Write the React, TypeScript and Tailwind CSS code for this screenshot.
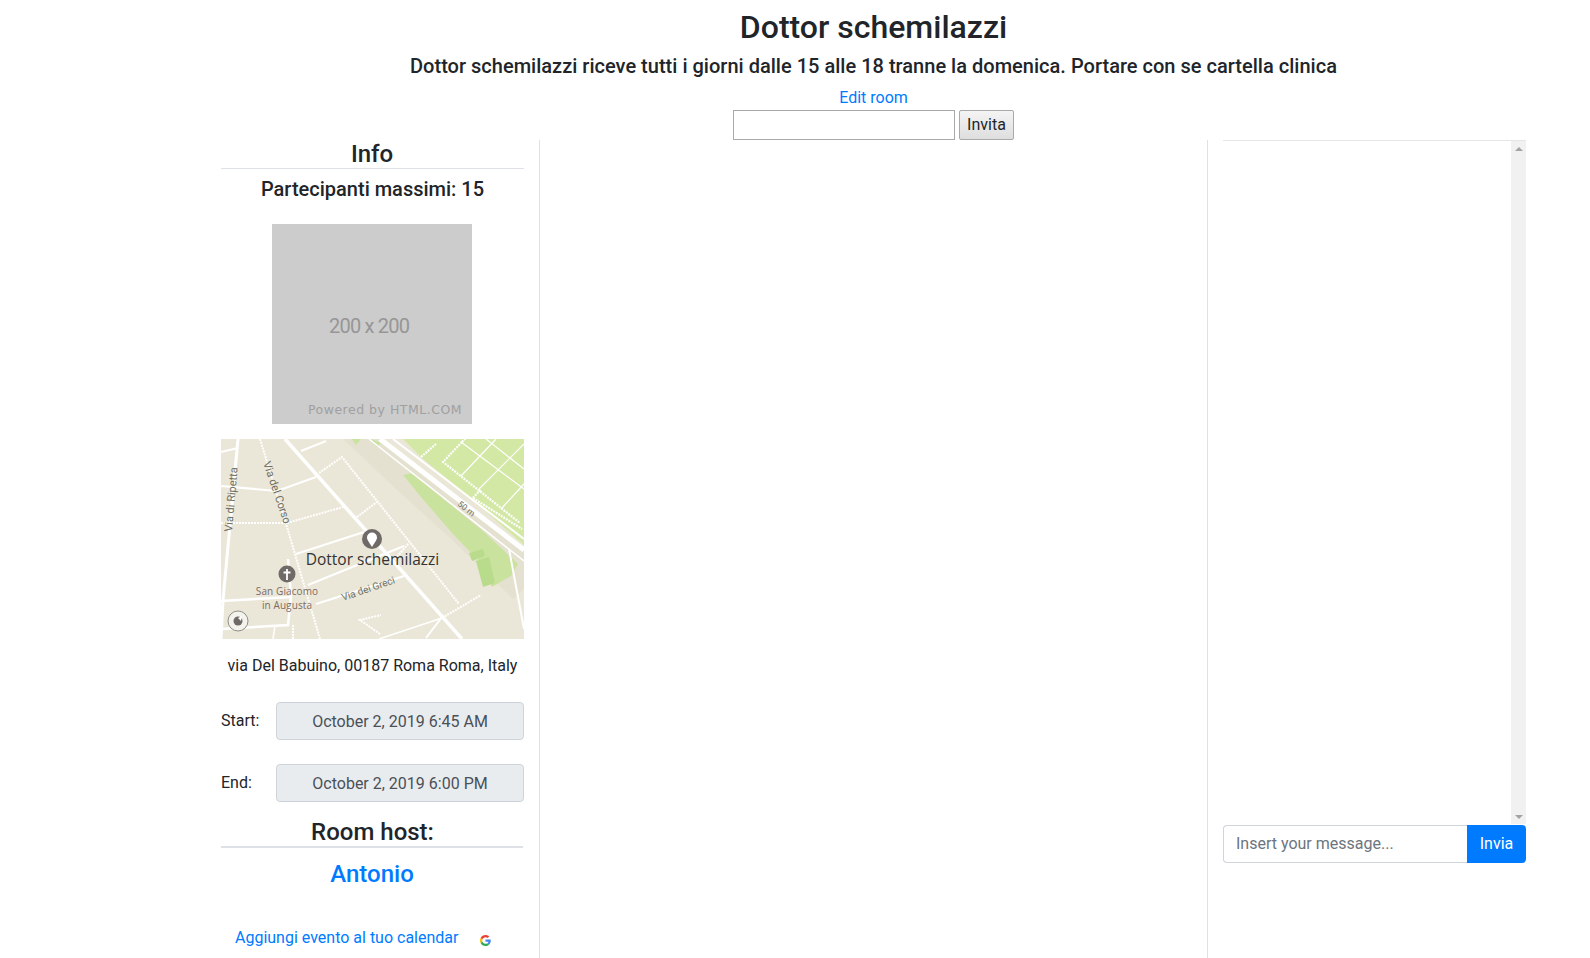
const font = { fontFamily: "Roboto, sans-serif" };

function MapThumb() {
  const label = "font-['Roboto'] fill-[#6f6f62]";
  return (
    <svg width="303" height="200" viewBox="0 0 303 200" className="block">
      <rect width="303" height="200" fill="#ebe7d8" />
      {/* railway embankment and park */}
      <path d="M122 0L159 0L303 112L303 150L292 160L230 100L175 50Z" fill="#e5e1d0" />
      <path d="M185 0L303 0L303 106L252 61L202 20L182 0Z" fill="#d2e8a4" />
      <path d="M182 36L192 34L225 62L262 92L297 125L290 137L271 148L258 122L232 95L200 58Z" fill="#c9e29e" />
      <path d="M248 114L262 110L264 117L251 122Z M255 122L268 118L274 144L262 148Z" fill="#b9dc8c" />
      <path d="M131 0L135 6L140 0M150 0L156 8L160 4" fill="#c9e29e" />
      {/* park paths */}
      <g stroke="#fff" fill="none">
        <path d="M240 37L275 0M258 50L303 5M280 70L303 45M240 3L303 50M265 0L303 30" strokeWidth="1.200" />
        <path d="M241 3L222 23L299 84M252 59L301 90M252 59L260 50M241 3L250 -6M200 18L215 5" strokeWidth="2.200" strokeDasharray="2 1" />
      </g>
      {/* railway */}
      <g stroke="#fff" fill="none">
        <path d="M159 0L303 111" strokeWidth="5" />
        <path d="M172 0L303 100" strokeWidth="2" />
        <path d="M148 0L303 122" strokeWidth="1.500" />
        <path d="M288 110L303 190" strokeWidth="2" />
      </g>
      {/* streets */}
      <g stroke="#fff" fill="none" strokeWidth="2.500">
        <path d="M64 0L241 200" strokeWidth="3.500" />
        <path d="M17 0L2 161L0 200" strokeWidth="3" />
        <path d="M0 47L56 52L95 38" strokeWidth="2" />
        <path d="M0 13L17 9M80 12L105 2" strokeWidth="2" />
        <path d="M75 115L143 93" strokeWidth="2" />
        <path d="M87 146L183 107" strokeWidth="2" />
        <path d="M0 162L70 158L67 120" strokeWidth="2.500" />
        <path d="M0 190L67 186L70 158" strokeWidth="2.500" />
        <path d="M95 165L183 137" strokeWidth="2" />
        <path d="M205 199L221 178" strokeWidth="2" />
        <path d="M54 186L52 200M158 200L221 179" strokeWidth="1.500" />
      </g>
      <g stroke="#fff" fill="none" strokeWidth="2" strokeDasharray="2 1">
        <path d="M39 0L66 88L99 200" />
        <path d="M0 84L66 84L122 68" />
        <path d="M98 34L121 18L238 165" />
        <path d="M136 78L156 63" />
        <path d="M174 120L188 104" />
        <path d="M221 179L260 156" />
        <path d="M159 195L139 181L160 176" />
        <path d="M72 186L72 200" />
      </g>
      {/* POI pins */}
      <circle cx="151" cy="100" r="10" fill="#6f6a68" />
      <path d="M151 108C148 103 146 101 146 98.500A5 5 0 0 1 156 98.500C156 101 154 103 151 108Z" fill="#fff" />
      <text x="151.500" y="126" textAnchor="middle" fontSize="15.500" fill="#333" className="font-['Open_Sans']">Dottor schemilazzi</text>
      <circle cx="66" cy="135" r="8.500" fill="#6f6a68" />
      <path d="M66 130V141M62.500 133.500H69.500" stroke="#fff" strokeWidth="1.800" />
      <text x="66" y="156" textAnchor="middle" fontSize="10" letterSpacing="0.100" fill="#7d6a63" className="font-['Open_Sans']">San Giacomo</text>
      <text x="66" y="170" textAnchor="middle" fontSize="10" letterSpacing="0.100" fill="#7d6a63" className="font-['Open_Sans']">in Augusta</text>
      <text transform="translate(122 162) rotate(-19)" fontSize="10" className={label}>Via dei Greci</text>
      <text transform="translate(11 93) rotate(-85)" fontSize="11" className={label}>Via di Ripetta</text>
      <text transform="translate(42 24) rotate(71)" fontSize="11" className={label}>Via del Corso</text>
      <text transform="translate(236 66) rotate(38)" fontSize="8.500" className={label}>50 m</text>
      {/* locator button */}
      <circle cx="17" cy="182" r="10" fill="#f4f2ec" stroke="#8f8f88" strokeWidth="1" />
      <circle cx="17" cy="182" r="4.500" fill="#6f6a68" />
      <path d="M17 179L21 177L20 182Z" fill="#fff" />
    </svg>
  );
}

function GoogleG() {
  return (
    <svg width="11" height="11" viewBox="0 0 48 48">
      <path fill="#EA4335" d="M24 9.500c3.500 0 6.700 1.200 9.200 3.600l6.900-6.900C35.900 2.400 30.500 0 24 0 14.600 0 6.500 5.400 2.600 13.200l8 6.200C12.500 13.700 17.800 9.500 24 9.500z" />
      <path fill="#4285F4" d="M46.900 24.500c0-1.600-.2-3.100-.4-4.500H24v9h12.900c-.6 3-2.200 5.500-4.700 7.200l7.700 6c4.500-4.200 7-10.300 7-17.700z" />
      <path fill="#FBBC05" d="M10.500 28.600c-.5-1.500-.8-3-.8-4.600s.3-3.100.8-4.600l-8-6.200C.9 16.500 0 20.100 0 24s.9 7.500 2.600 10.800l7.900-6.200z" />
      <path fill="#34A853" d="M24 48c6.500 0 11.900-2.100 15.900-5.800l-7.700-6c-2.200 1.400-4.900 2.300-8.200 2.300-6.200 0-11.500-4.200-13.400-9.900l-8 6.200C6.500 42.600 14.600 48 24 48z" />
    </svg>
  );
}

function DateRow({ label, value }: { label: string; value: string }) {
  return (
    <div className="flex h-[38px] w-[303px]">
      <span className="w-[55px] text-[16px] leading-[37px]">{label}</span>
      <div className="flex-1 rounded border border-[#ced4da] bg-[#e9ecef] text-center leading-[37px] text-[#495057]">
        {value}
      </div>
    </div>
  );
}

export default function App() {
  return (
    <div style={font} className="h-[958px] overflow-hidden bg-white text-[16px] text-[#212529]">
      <div className="ml-[221px] w-[1305px] pt-2">
        <h2 className="mb-2 text-center text-[32px] leading-[38.400px] font-medium">Dottor schemilazzi</h2>
        <h5 className="mb-2 text-center text-[20px] leading-[24px] font-medium tracking-[0.015px]">
          Dottor schemilazzi riceve tutti i giorni dalle 15 alle 18 tranne la domenica. Portare con se cartella clinica
        </h5>
        <div className="text-center leading-[24px]">
          <a href="#" className="text-[#007bff]">Edit room</a>
        </div>
        <div className="flex justify-center gap-1">
          <input className="h-[30px] w-[222px] border border-[#a9a9a9] bg-white" />
          <button className="h-[30px] w-[55px] rounded-[2px] border border-[#a9a9a9] bg-gradient-to-b from-[#f4f4f4] to-[#dedede] text-[16px]">
            Invita
          </button>
        </div>

        <div className="flex h-[818px]">
          {/* info */}
          <div className="w-[319px] border-r border-[#dee2e6]">
            <div className="w-[303px]">
              <h4 className="h-[29px] border-b border-[#dee2e6] pr-[1px] text-center text-[24px] leading-[28.800px] font-medium">Info</h4>
              <h5 className="mt-[8px] text-center text-[20px] leading-[24px] font-medium">Partecipanti massimi: 15</h5>
              <div className="relative ml-[51px] mt-[23px] h-[200px] w-[200px] bg-[#cccccc]">
                <span className="absolute left-[57px] top-[90px] text-[20px] leading-[24px] tracking-[-0.800px] text-[#969696]">200 x 200</span>
                <span className="absolute right-[10px] top-[178px] font-['DejaVu_Sans'] text-[12.500px] leading-[16px] tracking-[0.500px] text-[#a0a0a0]">Powered by HTML.COM</span>
              </div>
              <div className="mt-[15px]"><MapThumb /></div>
              <p className="mt-[15px] text-center leading-[24px]">via Del Babuino, 00187 Roma Roma, Italy</p>
              <div className="mt-[24px] flex flex-col gap-[24px]">
                <DateRow label="Start:" value="October 2, 2019 6:45 AM" />
                <DateRow label="End:" value="October 2, 2019 6:00 PM" />
              </div>
              <h4 className="mt-[16px] h-[30px] w-[302px] border-b-2 border-[#dee2e6] pl-[1px] text-center text-[24px] leading-[28.800px] font-medium">Room host:</h4>
              <h4 className="mt-[12px] pr-[1px] text-center text-[24px] leading-[28.800px] font-medium text-[#007bff]">Antonio</h4>
              <div className="mt-[37px] flex items-center pl-[14px]">
                <a href="#" className="leading-[24px] text-[#007bff]">Aggiungi evento al tuo calendar</a>
                <span className="ml-[22px] mt-[5px]"><GoogleG /></span>
              </div>
            </div>
          </div>

          {/* video area */}
          <div className="w-[668px] border-r border-[#dee2e6]" />

          {/* chat */}
          <div className="ml-[15px] flex w-[303px] flex-col">
            <div className="flex h-[684px] justify-end border-t border-[#e6e6e6]">
              <div className="flex w-[15px] flex-col items-center justify-between bg-[#f1f1f1] pt-[6px] pb-[5px]">
                <span className="h-0 w-0 border-x-[4px] border-b-[4px] border-x-transparent border-b-[#a3a3a3]" />
                <span className="h-0 w-0 border-x-[4px] border-t-[4px] border-x-transparent border-t-[#a3a3a3]" />
              </div>
            </div>
            <div className="mt-[1px] flex h-[38px]">
              <input
                placeholder="Insert your message..."
                className="min-w-0 flex-1 rounded-l border border-r-0 border-[#ced4da] px-3 text-[16px] text-[#495057] placeholder:text-[#6c757d]"
              />
              <button className="w-[59px] rounded-r bg-[#007bff] text-[16px] text-white">Invia</button>
            </div>
          </div>
        </div>
      </div>
    </div>
  );
}
